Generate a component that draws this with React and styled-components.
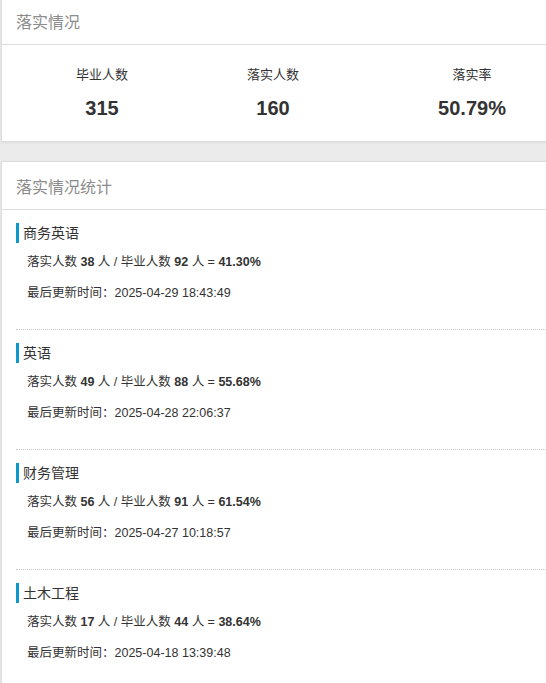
import React from 'react';
import styled, { createGlobalStyle } from 'styled-components';

const GlobalStyle = createGlobalStyle`
  html, body {
    margin: 0;
    padding: 0;
    background: #ebebeb;
    overflow: hidden;
  }
  body {
    font-family: 'Liberation Sans', 'Noto Sans CJK SC', sans-serif;
    color: #333;
  }
`;

const Page = styled.div`
  display: flex;
  flex-direction: column;
  gap: 19px;
  margin: -4px -3px 0 1px;
`;

const Panel = styled.section`
  background: #fff;
  border: 1px solid #dcdcdc;
  box-shadow: 0 1px 2px rgba(0, 0, 0, 0.06);
  overflow: hidden;
`;

const PanelHeader = styled.h3`
  margin: 0;
  height: 47px;
  padding-left: 14px;
  display: flex;
  align-items: center;
  font-size: 16px;
  font-weight: normal;
  color: #8c8c8c;
  border-bottom: 1px solid #dedede;
`;

const StatRow = styled.div`
  display: grid;
  grid-template-columns: 200px 142px 256px;
  padding: 20px 0 19px;
`;

const Stat = styled.div`
  display: flex;
  flex-direction: column;
  align-items: center;
  gap: 9px;
`;

const StatLabel = styled.div`
  font-size: 13px;
  line-height: 20px;
  color: #333;
`;

const StatValue = styled.div`
  font-size: 20px;
  line-height: 28px;
  font-weight: bold;
  color: #333;
`;

const List = styled.div`
  display: flex;
  flex-direction: column;
`;

const Item = styled.div`
  margin-left: 14px;
  padding: 13px 0 20px;
  border-bottom: 1px dotted #c8c8c8;
`;

const ItemTitle = styled.div`
  border-left: 3px solid #0b98cb;
  padding-left: 4px;
  font-size: 14px;
  line-height: 20px;
  color: #333;
  margin-bottom: 4px;
`;

const Line = styled.div`
  padding-left: 11px;
  font-size: 12.5px;
  line-height: 31px;
  color: #333;

  b {
    font-weight: bold;
  }
`;

const stats = [
  { label: '毕业人数', value: '315' },
  { label: '落实人数', value: '160' },
  { label: '落实率', value: '50.79%' },
];

const majors = [
  { name: '商务英语', done: 38, total: 92, rate: '41.30%', time: '2025-04-29 18:43:49' },
  { name: '英语', done: 49, total: 88, rate: '55.68%', time: '2025-04-28 22:06:37' },
  { name: '财务管理', done: 56, total: 91, rate: '61.54%', time: '2025-04-27 10:18:57' },
  { name: '土木工程', done: 17, total: 44, rate: '38.64%', time: '2025-04-18 13:39:48' },
];

const App = () => {
  return (
    <>
      <GlobalStyle />
      <Page>
        <Panel>
          <PanelHeader>落实情况</PanelHeader>
          <StatRow>
            {stats.map((s) => (
              <Stat key={s.label}>
                <StatLabel>{s.label}</StatLabel>
                <StatValue>{s.value}</StatValue>
              </Stat>
            ))}
          </StatRow>
        </Panel>
        <Panel>
          <PanelHeader>落实情况统计</PanelHeader>
          <List>
            {majors.map((m) => (
              <Item key={m.name}>
                <ItemTitle>{m.name}</ItemTitle>
                <Line>
                  落实人数 <b>{m.done}</b> 人 / 毕业人数 <b>{m.total}</b> 人 = <b>{m.rate}</b>
                </Line>
                <Line>最后更新时间：{m.time}</Line>
              </Item>
            ))}
          </List>
        </Panel>
      </Page>
    </>
  );
};

export default App;
